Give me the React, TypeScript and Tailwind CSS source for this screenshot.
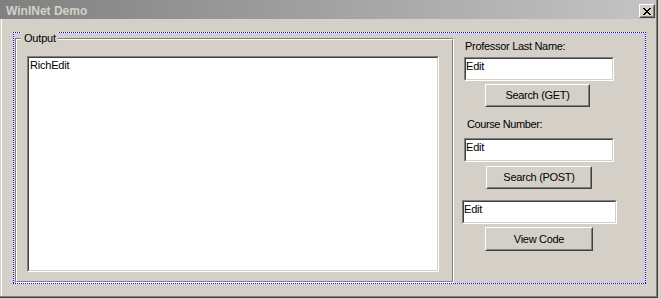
import React from "react";

const font = "font-['Liberation_Sans',Arial,sans-serif]";

function Edit({ className, children }: { className: string; children?: React.ReactNode }) {
  return (
    <div className={`border border-t-[#808080] border-l-[#808080] border-b-white border-r-white ${className}`}>
      <div className="w-full h-full border border-t-[#404040] border-l-[#404040] border-b-[#d4d0c8] border-r-[#d4d0c8] bg-white">
        {children}
      </div>
    </div>
  );
}

function Button({ className, label }: { className: string; label: string }) {
  return (
    <div className={`border border-t-white border-l-white border-b-[#404040] border-r-[#404040] ${className}`}>
      <div className="w-full h-full border border-t-[#d4d0c8] border-l-[#d4d0c8] border-b-[#808080] border-r-[#808080] bg-[#d4d0c8] flex items-center justify-center text-[11px] leading-[13px] tracking-[-0.3px] text-black">
        {label}
      </div>
    </div>
  );
}

function EditText() {
  return <div className="pt-[1px] text-[11px] leading-[13px] tracking-[-0.2px] text-black">Edit</div>;
}

export default function App() {
  return (
    <div className={`w-[661px] h-[299px] bg-[#d4d0c8] ${font}`}>
      <div className="w-[658px] h-[298px] border-r border-b border-r-[#404040] border-b-[#404040]">
        <div className="w-full h-full border-r border-b border-r-[#808080] border-b-[#808080] flex flex-col">
          {/* Title bar */}
          <div className="h-[19px] flex items-start bg-[linear-gradient(to_right,#808080,#c4c4c4)]">
            <div className="pl-[6px] pt-[4px] text-[12px] leading-[14px] font-bold text-[#d4d0c8] flex-1">
              WinINet Demo
            </div>
            <div className="mt-[4px] mr-[1px] w-[16px] h-[14px] border border-t-white border-l-white border-b-[#404040] border-r-[#404040]">
              <div className="w-full h-full border border-t-[#d4d0c8] border-l-[#d4d0c8] border-b-[#808080] border-r-[#808080] bg-[#d4d0c8] flex items-center justify-center">
                <svg width="8" height="7" viewBox="0 0 8 7" shapeRendering="crispEdges">
                  <path
                    fill="#000"
                    d="M0 0h2v1H0zM6 0h2v1H6zM1 1h2v1H1zM5 1h2v1H5zM2 2h4v1H2zM3 3h2v1H3zM2 4h4v1H2zM1 5h2v1H1zM5 5h2v1H5zM0 6h2v1H0zM6 6h2v1H6z"
                  />
                </svg>
              </div>
            </div>
          </div>
          {/* Body */}
          <div className="flex-1 border-l-2 border-l-[#d4d0c8] relative">
            <div className="absolute left-[-1px] top-0 bottom-0 w-[1px] bg-white" />
            <div className="ml-[11px] mt-[13px] w-[633px] h-[252px] p-[1px] bg-white [background:repeating-linear-gradient(to_right,#0000ff_0_1px,#ffffff_1px_2px)_left_top/100%_1px_no-repeat,repeating-linear-gradient(to_right,#0000ff_0_1px,#ffffff_1px_2px)_left_bottom/100%_1px_no-repeat,repeating-linear-gradient(to_bottom,#0000ff_0_1px,#ffffff_1px_2px)_left_top/1px_100%_no-repeat,repeating-linear-gradient(to_bottom,#0000ff_0_1px,#ffffff_1px_2px)_right_top/1px_100%_no-repeat]">
              <div className="w-full h-full bg-[#d4d0c8] flex">
                {/* Group box */}
                <div className="ml-[1px] mt-[5px] w-[439px] h-[245px] relative border border-t-[#808080] border-l-[#808080] border-b-white border-r-white">
                  <div className="w-full h-full border border-t-white border-l-white border-b-[#808080] border-r-[#808080]">
                    <Edit className="ml-[10px] mt-[16px] w-[412px] h-[216px]">
                      <div className="pl-[1px] pt-[1px] text-[11px] leading-[13px] tracking-[-0.2px] text-black">RichEdit</div>
                    </Edit>
                  </div>
                  <div className="absolute left-[5px] top-[-7px] pl-[3px] pr-[2px] bg-[#d4d0c8] text-[11px] leading-[13px] tracking-[-0.2px] text-black">
                    Output
                  </div>
                </div>
                {/* Right column */}
                <div className="ml-[8px] flex flex-col items-start">
                  <div className="ml-[3px] mt-[7px] text-[11px] leading-[13px] tracking-[-0.3px] text-black">Professor Last Name:</div>
                  <Edit className="ml-[2px] mt-[4px] w-[150px] h-[24px]">
                    <EditText />
                  </Edit>
                  <Button className="ml-[23px] mt-[3px] w-[105px] h-[23px]" label="Search (GET)" />
                  <div className="ml-[5px] mt-[11px] text-[11px] leading-[13px] tracking-[-0.4px] text-black">Course Number:</div>
                  <Edit className="ml-[2px] mt-[7px] w-[150px] h-[24px]">
                    <EditText />
                  </Edit>
                  <Button className="ml-[24px] mt-[4px] w-[106px] h-[23px]" label="Search (POST)" />
                  <Edit className="ml-0 mt-[11px] w-[155px] h-[24px]">
                    <EditText />
                  </Edit>
                  <Button className="ml-[23px] mt-[3px] w-[108px] h-[24px]" label="View Code" />
                </div>
              </div>
            </div>
          </div>
        </div>
      </div>
    </div>
  );
}
